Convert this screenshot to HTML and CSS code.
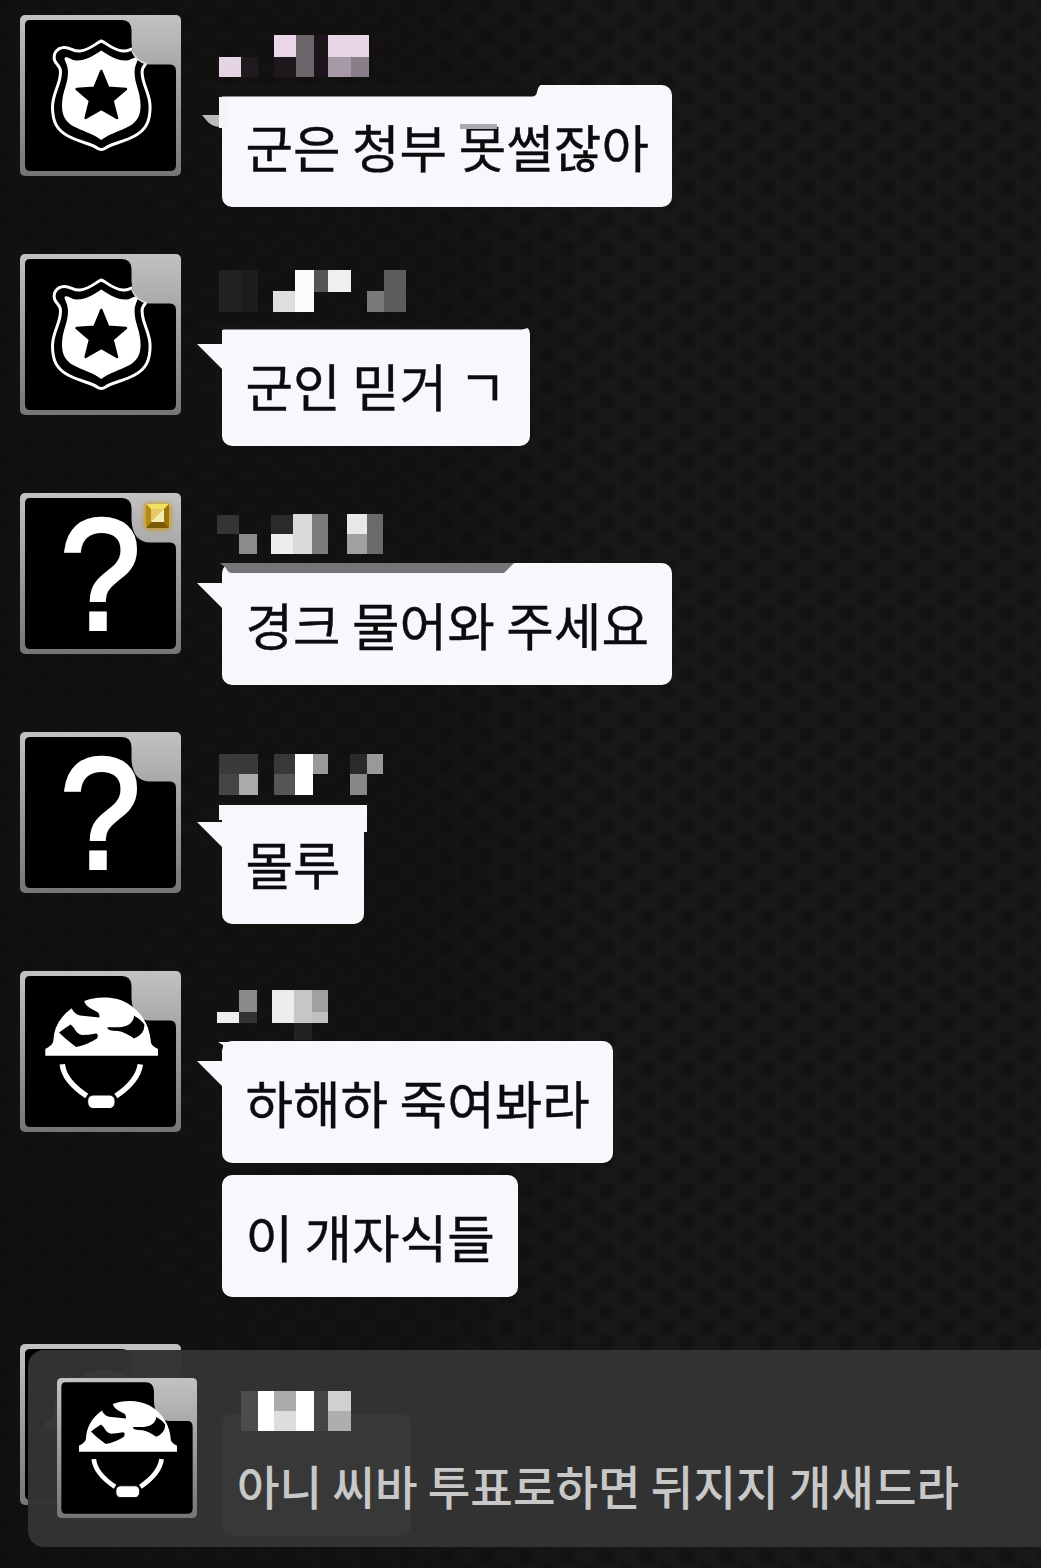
FILE: index.html
```html
<!DOCTYPE html>
<html lang="ko">

<head>
    <meta charset="UTF-8">
    <meta name="viewport" content="width=device-width, initial-scale=1.0">
    <title>채팅</title>
    <link rel="stylesheet" href="styles.css">
</head>

<body>
    <!-- shared avatar shapes -->
    <svg class="defs" width="0" height="0">
        <defs>
            <linearGradient id="metal" x1="0" y1="0" x2="0" y2="1">
                <stop offset="0" stop-color="#c2c2c2" />
                <stop offset="0.35" stop-color="#a6a6a6" />
                <stop offset="1" stop-color="#757575" />
            </linearGradient>
            <path id="plate" d="M10 5H102Q111 5 111.500 15V27C112 42 119 49.500 130 49.500H150Q156 49.500 156 56V150Q156 156 150 156H10Q5 156 5 150V10Q5 5 10 5Z" />
            <clipPath id="plate-clip">
                <use href="#plate" />
            </clipPath>
            <symbol id="frame" viewBox="0 0 161 161">
                <rect width="161" height="161" rx="5" fill="url(#metal)" />
                <use href="#plate" fill="#000" />
            </symbol>
            <symbol id="police" viewBox="0 0 161 161">
                <g clip-path="url(#plate-clip)">
                    <path d="M81.3 26C76 28 70 35 60 36C54 37 50 32 44 32.500C37 33 33 38 34.500 45C36 50 40.500 50 40.500 57C40.500 70 32.500 78 32.500 92C32.500 107 37 115 48 121C59 127 72 129 77 133Q81.300 136 85.600 133C90.600 129 103.600 127 114.600 121C125.600 115 130.100 107 130.100 92C130.100 78 122.100 70 122.100 57C122.100 50 126.600 50 128.100 45C129.600 38 125.600 33 118.600 32.500C112.600 32 108.600 37 102.600 36C92.600 35 86.600 28 81.300 26Z" fill="none" stroke="#fff" stroke-width="3" />
                    <path d="M81.3 35.500C73 41 65 46 56 45.500C51 45 48 41 45 42.500C43 44 48 49 48 57C48 70 42 76 42 91C42 101 46 107 53 111C62 116 74 119 81.300 125C88.600 119 100.600 116 109.600 111C116.600 107 120.600 101 120.600 91C120.600 76 114.600 70 114.600 57C114.600 49 119.600 44 117.600 42.500C114.600 41 111.600 45 106.600 45.500C97.600 46 89.600 41 81.300 35.500Z" fill="#fff" />
                </g>
                <path d="M112 36Q116 46 127 49" fill="none" stroke="#ddd" stroke-width="1.500" />
                <path d="M81.3 56L88.200 72.800L106 74L92.500 85.500L97 103L81.300 94L65.600 103L70 85.500L56.600 74L74.500 72.800Z" fill="#000" stroke="#000" stroke-width="2.500" stroke-linejoin="round" />
            </symbol>
            <symbol id="helmet" viewBox="0 0 161 161">
                <path d="M25.300 84.700V78Q33 74 33.300 70Q34 50 51.700 37.300Q54 43 60 44.500L79.300 46.500Q80 44 78 41.500L70 37Q65 34 64.300 30C76 25 95 25 107 32Q129 45 131 72Q132 75 138 78V84.700Z" fill="#fff" />
                <path d="M50.700 53.500L54 57Q57 63 62 64Q68 64 76 62.500Q79 63 77 67.500Q67 74 56 76L46 68L39 61.500Q45 57 50.700 53.500Z" fill="#000" />
                <path d="M87.300 56.300H100Q109 55 112 50.500Q115 46 113.500 44.500Q122 49 124.500 54Q124 64 114 67.500Q105 61 98 60Q87 60 87.300 56.300Z" fill="#000" />
                <path d="M42.300 93.300Q44 110 66.700 125M120.300 93.300Q118 110 95.900 125" fill="none" stroke="#fff" stroke-width="5.500" />
                <rect x="67.700" y="124" width="27.300" height="13.500" rx="5.500" fill="#fff" stroke="#000" stroke-width="1" />
            </symbol>
            <symbol id="question" viewBox="0 0 161 161">
                <text transform="translate(80.500 135.500) scale(0.92 1)" text-anchor="middle" class="question">?</text>
            </symbol>
        </defs>
    </svg>

    <main class="chat">
        <article class="message">
            <svg class="avatar" viewBox="0 0 161 161">
                <use href="#frame" />
                <use href="#police" />
            </svg>
            <div class="body">
                <svg class="name" viewBox="222 15 451 70">
                    <rect x="219" y="57" width="22" height="20" fill="#e5d5e4" />
                    <rect x="241" y="57" width="17" height="20" fill="#1e1a1d" />
                    <rect x="274" y="35" width="22" height="22" fill="#ead6e8" />
                    <rect x="274" y="57" width="22" height="20" fill="#1c181b" />
                    <rect x="296" y="35" width="18" height="42" fill="#6c666b" />
                    <rect x="314" y="35" width="14" height="42" fill="#1d141b" />
                    <rect x="328" y="35" width="41" height="22" fill="#e6d5e4" />
                    <rect x="328" y="57" width="23" height="20" fill="#a899a7" />
                    <rect x="351" y="57" width="18" height="20" fill="#8a7e88" />
                    <path d="M218 84H541Q538 87 537 92Q536 96.500 532 96.500H218Z" fill="#151413" />
                    <path d="M219 97H226V128H219Z" fill="#f4f5f9" />
                    <path d="M202 115H219V127Q211 126 207 121Z" fill="#b9bbbd" />
                    <rect x="460" y="124" width="37" height="5" fill="#a9aaad" />
                </svg>
                <p class="bubble">군은 청부 못썰잖아</p>
            </div>
        </article>

        <article class="message">
            <svg class="avatar" viewBox="0 0 161 161">
                <use href="#frame" />
                <use href="#police" />
            </svg>
            <div class="body">
                <svg class="name" viewBox="222 254 451 70">
                    <rect x="219" y="270" width="22" height="42" fill="#222" />
                    <rect x="241" y="270" width="17" height="42" fill="#1d1d1d" />
                    <rect x="273" y="291" width="22" height="21" fill="#dfdedd" />
                    <rect x="295" y="270" width="19" height="42" fill="#fcfcfb" />
                    <rect x="314" y="270" width="14" height="22" fill="#555" />
                    <rect x="328" y="270" width="23" height="22" fill="#f0efed" />
                    <rect x="367" y="291" width="17" height="21" fill="#7a7a79" />
                    <rect x="384" y="270" width="22" height="42" fill="#5c5c5b" />
                    <path d="M218 323H532V327L522 329.500H218Z" fill="#151413" />
                    <path d="M222 330H232V345H222Z" fill="#f7f8fc" />
                    <path d="M197 344H224V371Z" fill="#f7f8fc" />
                </svg>
                <p class="bubble">군인 믿거 ㄱ</p>
            </div>
        </article>

        <article class="message">
            <svg class="avatar" viewBox="0 0 161 161">
                <use href="#frame" />
                <use href="#question" />
                <g class="gem">
                    <rect class="glow" x="124" y="10" width="27" height="27" rx="5" fill="#c79a2a" />
                    <rect x="125.500" y="11" width="24" height="24" rx="2" fill="#d9b41f" />
                    <path d="M126 11H149L144 16H131Z" fill="#f3df62" />
                    <path d="M126 35H149L144 29H131Z" fill="#7d5a08" />
                    <path d="M126 11L131 16V29L126 35Z" fill="#b88a14" />
                    <path d="M149 11L144 16V29L149 35Z" fill="#9a7410" />
                    <path d="M131 16H144L131 29Z" fill="#e3ca68" />
                    <path d="M144 16V29H131Z" fill="#f4ecb2" />
                </g>
            </svg>
            <div class="body">
                <svg class="name" viewBox="222 493 451 70">
                    <rect x="217" y="515" width="22" height="19" fill="#343434" />
                    <rect x="239" y="534" width="18" height="20" fill="#8b8b8b" />
                    <rect x="271" y="515" width="22" height="19" fill="#2a2a2a" />
                    <rect x="271" y="534" width="22" height="20" fill="#eee" />
                    <rect x="293" y="514" width="19" height="40" fill="#dadad8" />
                    <rect x="312" y="514" width="16" height="40" fill="#7c7c7b" />
                    <rect x="347" y="514" width="20" height="20" fill="#e8e8e8" />
                    <rect x="347" y="534" width="20" height="20" fill="#a0a0a0" />
                    <rect x="367" y="514" width="16" height="40" fill="#6b6b6b" />
                    <path d="M220 563H514L504 573H232Q228 573 226 568Z" fill="#757577" />
                    <path d="M197 583H224V610Z" fill="#f7f8fc" />
                </svg>
                <p class="bubble">경크 물어와 주세요</p>
            </div>
        </article>

        <article class="message">
            <svg class="avatar" viewBox="0 0 161 161">
                <use href="#frame" />
                <use href="#question" />
            </svg>
            <div class="body">
                <svg class="name" viewBox="222 732 451 70">
                    <rect x="219" y="754" width="39" height="20" fill="#3a3a3a" />
                    <rect x="219" y="774" width="20" height="21" fill="#454545" />
                    <rect x="239" y="774" width="19" height="21" fill="#aaa" />
                    <rect x="274" y="754" width="21" height="20" fill="#383838" />
                    <rect x="274" y="774" width="21" height="21" fill="#555" />
                    <rect x="295" y="754" width="18" height="41" fill="#fff" />
                    <rect x="313" y="754" width="15" height="20" fill="#999" />
                    <rect x="350" y="754" width="17" height="20" fill="#2a2a2a" />
                    <rect x="367" y="754" width="16" height="20" fill="#999" />
                    <rect x="350" y="774" width="17" height="21" fill="#888" />
                    <rect x="218" y="801" width="152" height="4" fill="#151413" />
                    <path d="M219 805H367V832H357V820H219Z" fill="#f7f8fc" />
                    <path d="M197 822H224V849Z" fill="#f7f8fc" />
                </svg>
                <p class="bubble">몰루</p>
            </div>
        </article>

        <article class="message">
            <svg class="avatar" viewBox="0 0 161 161">
                <use href="#frame" />
                <use href="#helmet" />
            </svg>
            <div class="body">
                <svg class="name" viewBox="222 971 451 70">
                    <rect x="217" y="1012" width="22" height="11" fill="#eee" />
                    <rect x="239" y="990" width="18" height="22" fill="#8a8a8a" />
                    <rect x="239" y="1012" width="18" height="11" fill="#333" />
                    <rect x="272" y="990" width="22" height="33" fill="#ecedeb" />
                    <rect x="294" y="990" width="18" height="33" fill="#c6c6c5" />
                    <rect x="312" y="990" width="16" height="22" fill="#a0a0a0" />
                    <rect x="312" y="1012" width="16" height="11" fill="#c0c0c0" />
                    <rect x="294" y="1023" width="18" height="17" fill="#222" />
                    <path d="M218 1042H232V1050H223V1045Z" fill="#f7f8fc" />
                    <path d="M197 1061H224V1088Z" fill="#f7f8fc" />
                </svg>
                <p class="bubble">하해하 죽여봐라</p>
                <p class="bubble">이 개자식들</p>
            </div>
        </article>

        <article class="message">
            <svg class="avatar" viewBox="0 0 161 161">
                <use href="#frame" />
                <use href="#helmet" />
            </svg>
            <div class="body">
                <svg class="name" viewBox="222 1344 451 70"></svg>
                <p class="bubble empty"></p>
            </div>
        </article>
    </main>

    <!-- new message popup -->
    <aside class="toast">
        <svg class="toast-avatar" viewBox="0 0 161 161">
            <use href="#frame" />
            <use href="#helmet" />
        </svg>
        <div class="toast-body">
            <svg class="toast-name" viewBox="241 1391 110 40">
                <rect x="241" y="1391" width="17" height="40" fill="#4c4c4c" />
                <rect x="258" y="1391" width="16" height="40" fill="#fff" />
                <rect x="274" y="1391" width="22" height="20" fill="#aaa" />
                <rect x="274" y="1411" width="22" height="20" fill="#ddd" />
                <rect x="296" y="1391" width="18" height="40" fill="#fff" />
                <rect x="314" y="1391" width="14" height="40" fill="#454545" />
                <rect x="328" y="1391" width="23" height="20" fill="#d0d0d0" />
                <rect x="328" y="1411" width="23" height="20" fill="#aeaeae" />
            </svg>
            <p class="toast-text">아니 씨바 투표로하면 뒤지지 개새드라</p>
        </div>
    </aside>
</body>

</html>
```
FILE: styles.css
```css
* {
    box-sizing: border-box;
}

body {
    position: relative;
    margin: 0;
    height: 1568px;
    overflow: hidden;
    font-family: "Noto Sans CJK KR", "Noto Sans", sans-serif;
    background-color: #191817;
    background-image:
        linear-gradient(to right, rgba(14, 13, 12, 0.6), rgba(14, 13, 12, 0.5) 400px, rgba(14, 13, 12, 0) 620px),
        radial-gradient(ellipse 12px 12px at 20px 15px, #131211 30%, rgba(19, 18, 17, 0) 100%),
        radial-gradient(ellipse 12px 12px at 20px 15px, #131211 30%, rgba(19, 18, 17, 0) 100%);
    background-size: auto, 40px 30.4px, 40px 30.4px;
    background-position: 0 0, 7px 6px, 27px 21.2px;
}

.defs {
    position: absolute;
}

.chat {
    display: flex;
    flex-direction: column;
    gap: 47px;
    padding: 15px 0 0 20px;
}

.message {
    display: flex;
    align-items: flex-start;
    gap: 41px;
}

.avatar {
    flex: none;
    width: 161px;
    height: 161px;
}

.question {
    font-family: "Liberation Sans", Arial, sans-serif;
    font-size: 157px;
    fill: #fff;
    stroke: #fff;
    stroke-width: 4px;
}

.glow {
    filter: blur(2px);
}

.body {
    display: flex;
    flex-direction: column;
    align-items: flex-start;
}

/* blocked-out names reach down over the bubble edge */
.name {
    position: relative;
    z-index: 1;
    width: 451px;
    height: 70px;
    overflow: visible;
}

.bubble {
    height: 122px;
    margin: 0;
    padding: 0 23.4px;
    border-radius: 10px;
    background-color: #f7f8fc;
    color: #0c0c0e;
    font-size: 51.7px;
    line-height: 122px;
    word-spacing: -2.9px;
    white-space: nowrap;
    -webkit-text-stroke: 0.4px #0c0c0e;
}

.bubble + .bubble {
    margin-top: 12px;
}

.empty {
    width: 189px;
}

.toast {
    position: absolute;
    z-index: 2;
    top: 1350px;
    left: 28px;
    right: 0;
    display: flex;
    gap: 41px;
    height: 197px;
    padding: 28px 0 0 29px;
    border-radius: 16px 0 0 16px;
    background-color: rgba(51, 51, 51, 0.975);
}

.toast-avatar {
    flex: none;
    width: 140px;
    height: 140px;
}

.toast-body {
    padding-top: 13px;
}

.toast-name {
    display: block;
    width: 110px;
    height: 40px;
    margin-left: 3px;
}

.toast-text {
    margin: 20px 0 0 -1px;
    color: #c8c8c8;
    font-size: 46.3px;
    font-weight: 500;
    line-height: 68px;
    word-spacing: -2.8px;
    white-space: nowrap;
}
```
